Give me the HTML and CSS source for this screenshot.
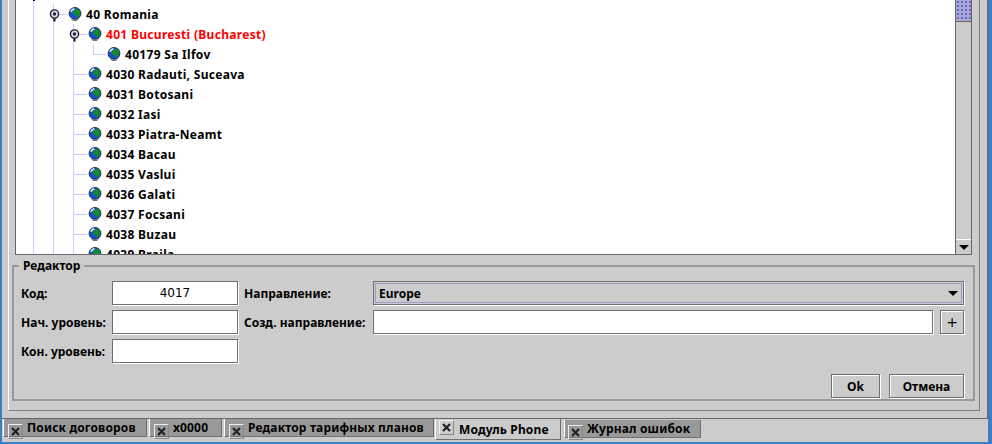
FILE: index.html
```html
<!DOCTYPE html>
<html lang="ru">
<head>
    <meta charset="UTF-8">
    <title>Модуль Phone</title>
    <link rel="stylesheet" href="styles.css">
</head>
<body>
    <svg class="defs" width="0" height="0">
        <symbol id="globe" viewBox="0 0 14 14">
            <ellipse cx="7" cy="12.4" rx="3" ry="1.2" fill="#f0f0f0" stroke="#333" stroke-width="0.7"/>
            <circle cx="7" cy="6.4" r="5.9" fill="#1450c8" stroke="#1a2440" stroke-width="0.9"/>
            <path d="M6 3.4l2.6-1.6 3 1.2.9 3-1.3 3.2-2.4 1.4-1-2.2-2-.8-1.6-2z" fill="#14882c"/>
            <path d="M2 4.6a5.4 5.4 0 0 1 4-3.5l1 1.1-2 1.4-1.4 1.4z" fill="#d4e4f0"/>
        </symbol>
        <symbol id="knob" viewBox="0 0 11 14">
            <rect x="4.5" y="8" width="2" height="4.5" fill="#111"/>
            <circle cx="5.5" cy="5" r="4.1" fill="#dcdcf2" stroke="#223" stroke-width="1.4"/>
            <circle cx="5.5" cy="5" r="1.7" fill="#223"/>
        </symbol>
        <symbol id="cross" viewBox="0 0 9 9">
            <path d="M1 1l7 7M8 1l-7 7" stroke="#222" stroke-width="2.2" fill="none"/>
        </symbol>
    </svg>

    <div class="window">
        <div class="module">
            <div class="panel">
                <div class="tree-box">
                    <div class="tree">
                        <ul class="branch root">
                            <li>
                                <ul class="branch">
                                    <li class="row">
                                        <svg class="knob"><use href="#knob"/></svg>
                                        <span class="stub"></span>
                                        <svg class="globe"><use href="#globe"/></svg>
                                        <span>40 Romania</span>
                                    </li>
                                    <li>
                                        <ul class="branch">
                                            <li class="row selected">
                                                <svg class="knob"><use href="#knob"/></svg>
                                                <span class="stub"></span>
                                                <svg class="globe"><use href="#globe"/></svg>
                                                <span>401 Bucuresti (Bucharest)</span>
                                            </li>
                                            <li>
                                                <ul class="branch leaf-only">
                                                    <li class="row">
                                                        <span class="stub elbow"></span>
                                                        <svg class="globe"><use href="#globe"/></svg>
                                                        <span>40179 Sa Ilfov</span>
                                                    </li>
                                                </ul>
                                            </li>
                                            <li class="row"><span class="stub"></span><svg class="globe"><use href="#globe"/></svg><span>4030 Radauti, Suceava</span></li>
                                            <li class="row"><span class="stub"></span><svg class="globe"><use href="#globe"/></svg><span>4031 Botosani</span></li>
                                            <li class="row"><span class="stub"></span><svg class="globe"><use href="#globe"/></svg><span>4032 Iasi</span></li>
                                            <li class="row"><span class="stub"></span><svg class="globe"><use href="#globe"/></svg><span>4033 Piatra-Neamt</span></li>
                                            <li class="row"><span class="stub"></span><svg class="globe"><use href="#globe"/></svg><span>4034 Bacau</span></li>
                                            <li class="row"><span class="stub"></span><svg class="globe"><use href="#globe"/></svg><span>4035 Vaslui</span></li>
                                            <li class="row"><span class="stub"></span><svg class="globe"><use href="#globe"/></svg><span>4036 Galati</span></li>
                                            <li class="row"><span class="stub"></span><svg class="globe"><use href="#globe"/></svg><span>4037 Focsani</span></li>
                                            <li class="row"><span class="stub"></span><svg class="globe"><use href="#globe"/></svg><span>4038 Buzau</span></li>
                                            <li class="row"><span class="stub"></span><svg class="globe"><use href="#globe"/></svg><span>4039 Braila</span></li>
                                        </ul>
                                    </li>
                                </ul>
                            </li>
                        </ul>
                    </div>
                    <div class="scrollbar">
                        <div class="thumb"></div>
                        <div class="track"></div>
                        <div class="arrow-btn"><span class="arrow"></span></div>
                    </div>
                </div>

                <fieldset class="editor">
                    <legend>Редактор</legend>
                    <div class="form">
                        <label>Код:</label>
                        <div class="input code">4017</div>
                        <label class="second">Направление:</label>
                        <div class="combo"><span>Europe</span><span class="arrow"></span></div>

                        <label>Нач. уровень:</label>
                        <div class="input"></div>
                        <label class="second">Созд. направление:</label>
                        <div class="input"></div>
                        <button class="btn plus">+</button>

                        <label>Кон. уровень:</label>
                        <div class="input"></div>
                    </div>
                    <div class="actions">
                        <button class="btn ok">Ok</button>
                        <button class="btn cancel">Отмена</button>
                    </div>
                </fieldset>
            </div>
        </div>

        <div class="tabs">
            <div class="tab t1"><span class="close"><svg class="cross"><use href="#cross"/></svg></span><span>Поиск договоров</span></div>
            <div class="tab t2"><span class="close"><svg class="cross"><use href="#cross"/></svg></span><span>x0000</span></div>
            <div class="tab t3"><span class="close"><svg class="cross"><use href="#cross"/></svg></span><span>Редактор тарифных планов</span></div>
            <div class="tab t4 active"><span class="close"><svg class="cross"><use href="#cross"/></svg></span><span>Модуль Phone</span></div>
            <div class="tab t5"><span class="close"><svg class="cross"><use href="#cross"/></svg></span><span>Журнал ошибок</span></div>
        </div>
    </div>
</body>
</html>
```

FILE: styles.css
```css
html, body {
    margin: 0;
    height: 100%;
    overflow: hidden;
}
body {
    background-color: #cccccc;
    color: #000000;
    font-family: "Noto Sans", sans-serif;
    font-size: 12px;
    font-weight: bold;
}
.defs {
    display: block;
    height: 0;
}
.window {
    height: 444px;
    box-sizing: border-box;
    display: flex;
    flex-direction: column;
    border-left: 2px solid #3d7fc4;
    border-right: 4px solid #3d7fc4;
    border-bottom: 2px solid #3d7fc4;
}
.module {
    height: 419px;
    flex: none;
    box-sizing: border-box;
    padding: 0 0 7px 6px;
    border-right: 1px solid #666666;
    border-bottom: 1px solid #666666;
}
.panel {
    height: 100%;
    box-sizing: border-box;
    width: 972px;
    padding: 0 4px 4px 3px;
    border-left: 1px solid #ffffff;
    border-right: 1px solid #808080;
    border-bottom: 1px solid #808080;
}

/* tree */
.tree-box {
    height: 255px;
    box-sizing: border-box;
    margin: 0 3px 0 3px;
    display: flex;
    border-left: 1px solid #666666;
    border-right: 1px solid #666666;
    border-bottom: 1px solid #666666;
}
.tree {
    flex: 1;
    background-color: #ffffff;
    overflow: hidden;
    padding-left: 17px;
    letter-spacing: 0.3px;
}
.branch {
    list-style: none;
    padding: 0;
    margin: 0 0 0 19px;
    border-left: 1px solid #ccccff;
}
.branch.root {
    position: relative;
    margin-left: 0;
    padding-top: 4px;
    height: 260px;
}
.branch.root::before {
    content: "";
    position: absolute;
    left: -1px;
    top: 0;
    width: 2px;
    height: 1px;
    background-color: #111111;
}
.branch.leaf-only {
    border-left: none;
    margin-left: 19px;
}
.row {
    position: relative;
    height: 20px;
    display: flex;
    align-items: center;
    white-space: nowrap;
}
.row.selected {
    color: #ff0000;
}
.stub {
    width: 13px;
    height: 1px;
    background-color: #ccccff;
    margin-right: 1px;
}
.stub.elbow {
    width: 12px;
    height: 10px;
    align-self: flex-start;
    background: none;
    border-left: 1px solid #ccccff;
    border-bottom: 1px solid #ccccff;
    box-sizing: content-box;
    margin-right: 1px;
}
.globe {
    width: 14px;
    height: 14px;
    margin-right: 4px;
    flex: none;
}
.knob {
    position: absolute;
    left: -5px;
    top: 5px;
    width: 11px;
    height: 14px;
}

/* scrollbar */
.scrollbar {
    width: 15px;
    display: flex;
    flex-direction: column;
    border-left: 1px solid #666666;
}
.thumb {
    height: 21px;
    border-bottom: 1px solid #666666;
    background-color: #a8a8dc;
    background-image: radial-gradient(#6a6ab0 35%, transparent 40%);
    background-size: 4px 4px;
}
.track {
    flex: 1;
}
.arrow-btn {
    height: 14px;
    display: flex;
    align-items: center;
    justify-content: center;
    border-top: 1px solid #ffffff;
}
.arrow {
    width: 0;
    height: 0;
    border-left: 5px solid transparent;
    border-right: 5px solid transparent;
    border-top: 5px solid #000000;
}

/* editor */
.editor {
    height: 142px;
    box-sizing: border-box;
    margin: 4px 0 0 0;
    padding: 9px 9px 0 7px;
    border: 2px solid #999999;
    min-width: 0;
}
.editor legend {
    margin-left: -2px;
    padding: 0 4px;
    line-height: 13px;
}
.form {
    display: grid;
    grid-template-columns: 91px 126px 135px 1fr 31px;
    grid-auto-rows: 24px;
    row-gap: 5px;
    align-items: center;
    white-space: nowrap;
}
.form .second {
    padding-left: 6px;
}
.input, .combo {
    box-sizing: border-box;
    height: 24px;
    background-color: #ffffff;
    border: 1px solid #707070;
    box-shadow: 1px 1px 0 #ffffff;
}
.code {
    text-align: center;
    font-family: "DejaVu Sans", sans-serif;
    font-weight: normal;
    line-height: 22px;
}
.combo {
    grid-column: 4 / 6;
    background-color: #cccccc;
    outline: 1px solid #9999cc;
    outline-offset: -3px;
    display: flex;
    align-items: center;
    justify-content: space-between;
    padding: 0 5px;
}
.btn {
    box-sizing: border-box;
    height: 24px;
    padding: 0;
    background-color: #cccccc;
    border: 1px solid #707070;
    box-shadow: 1px 1px 0 #ffffff, inset 1px 1px 0 #ffffff;
    font: inherit;
    color: #000000;
}
.plus {
    width: 24px;
    justify-self: end;
    font-family: "DejaVu Sans", sans-serif;
    font-weight: normal;
    font-size: 14px;
}
.actions {
    display: flex;
    justify-content: flex-end;
    gap: 9px;
    margin-top: 11px;
}
.ok {
    width: 49px;
}
.cancel {
    width: 75px;
}

/* tabs */
.tabs {
    flex: 1;
    display: flex;
    padding-left: 1px;
    gap: 2px;
    align-items: flex-start;
    letter-spacing: 0.15px;
}
.tab {
    height: 18px;
    box-sizing: border-box;
    background-color: #999999;
    display: flex;
    align-items: center;
    gap: 4px;
    padding-left: 4px;
    white-space: nowrap;
    border-left: 1px solid #ffffff;
    border-right: 1px solid #707070;
    border-bottom: 1px solid #707070;
}
.close {
    box-sizing: border-box;
    width: 15px;
    height: 15px;
    margin-top: 4px;
    margin-bottom: -4px;
    flex: none;
    display: flex;
    align-items: center;
    justify-content: center;
    border: 1px solid #eeeeee;
    border-right-color: #888888;
    border-bottom-color: #888888;
}
.cross {
    width: 9px;
    height: 9px;
}
.t1 {
    width: 144px;
}
.t2 {
    width: 73px;
}
.t3 {
    width: 210px;
}
.t4 {
    width: 126px;
    height: 21px;
    background-color: #cccccc;
    margin-left: -1px;
    padding-left: 3px;
    gap: 5px;
}
.t4 .close {
    margin: 0 0 3px 0;
}
.t4 span:last-child {
    margin-top: 1px;
}
.t5 {
    width: 137px;
    margin-left: 1px;
    margin-top: 1px;
    padding-left: 3px;
}
```
